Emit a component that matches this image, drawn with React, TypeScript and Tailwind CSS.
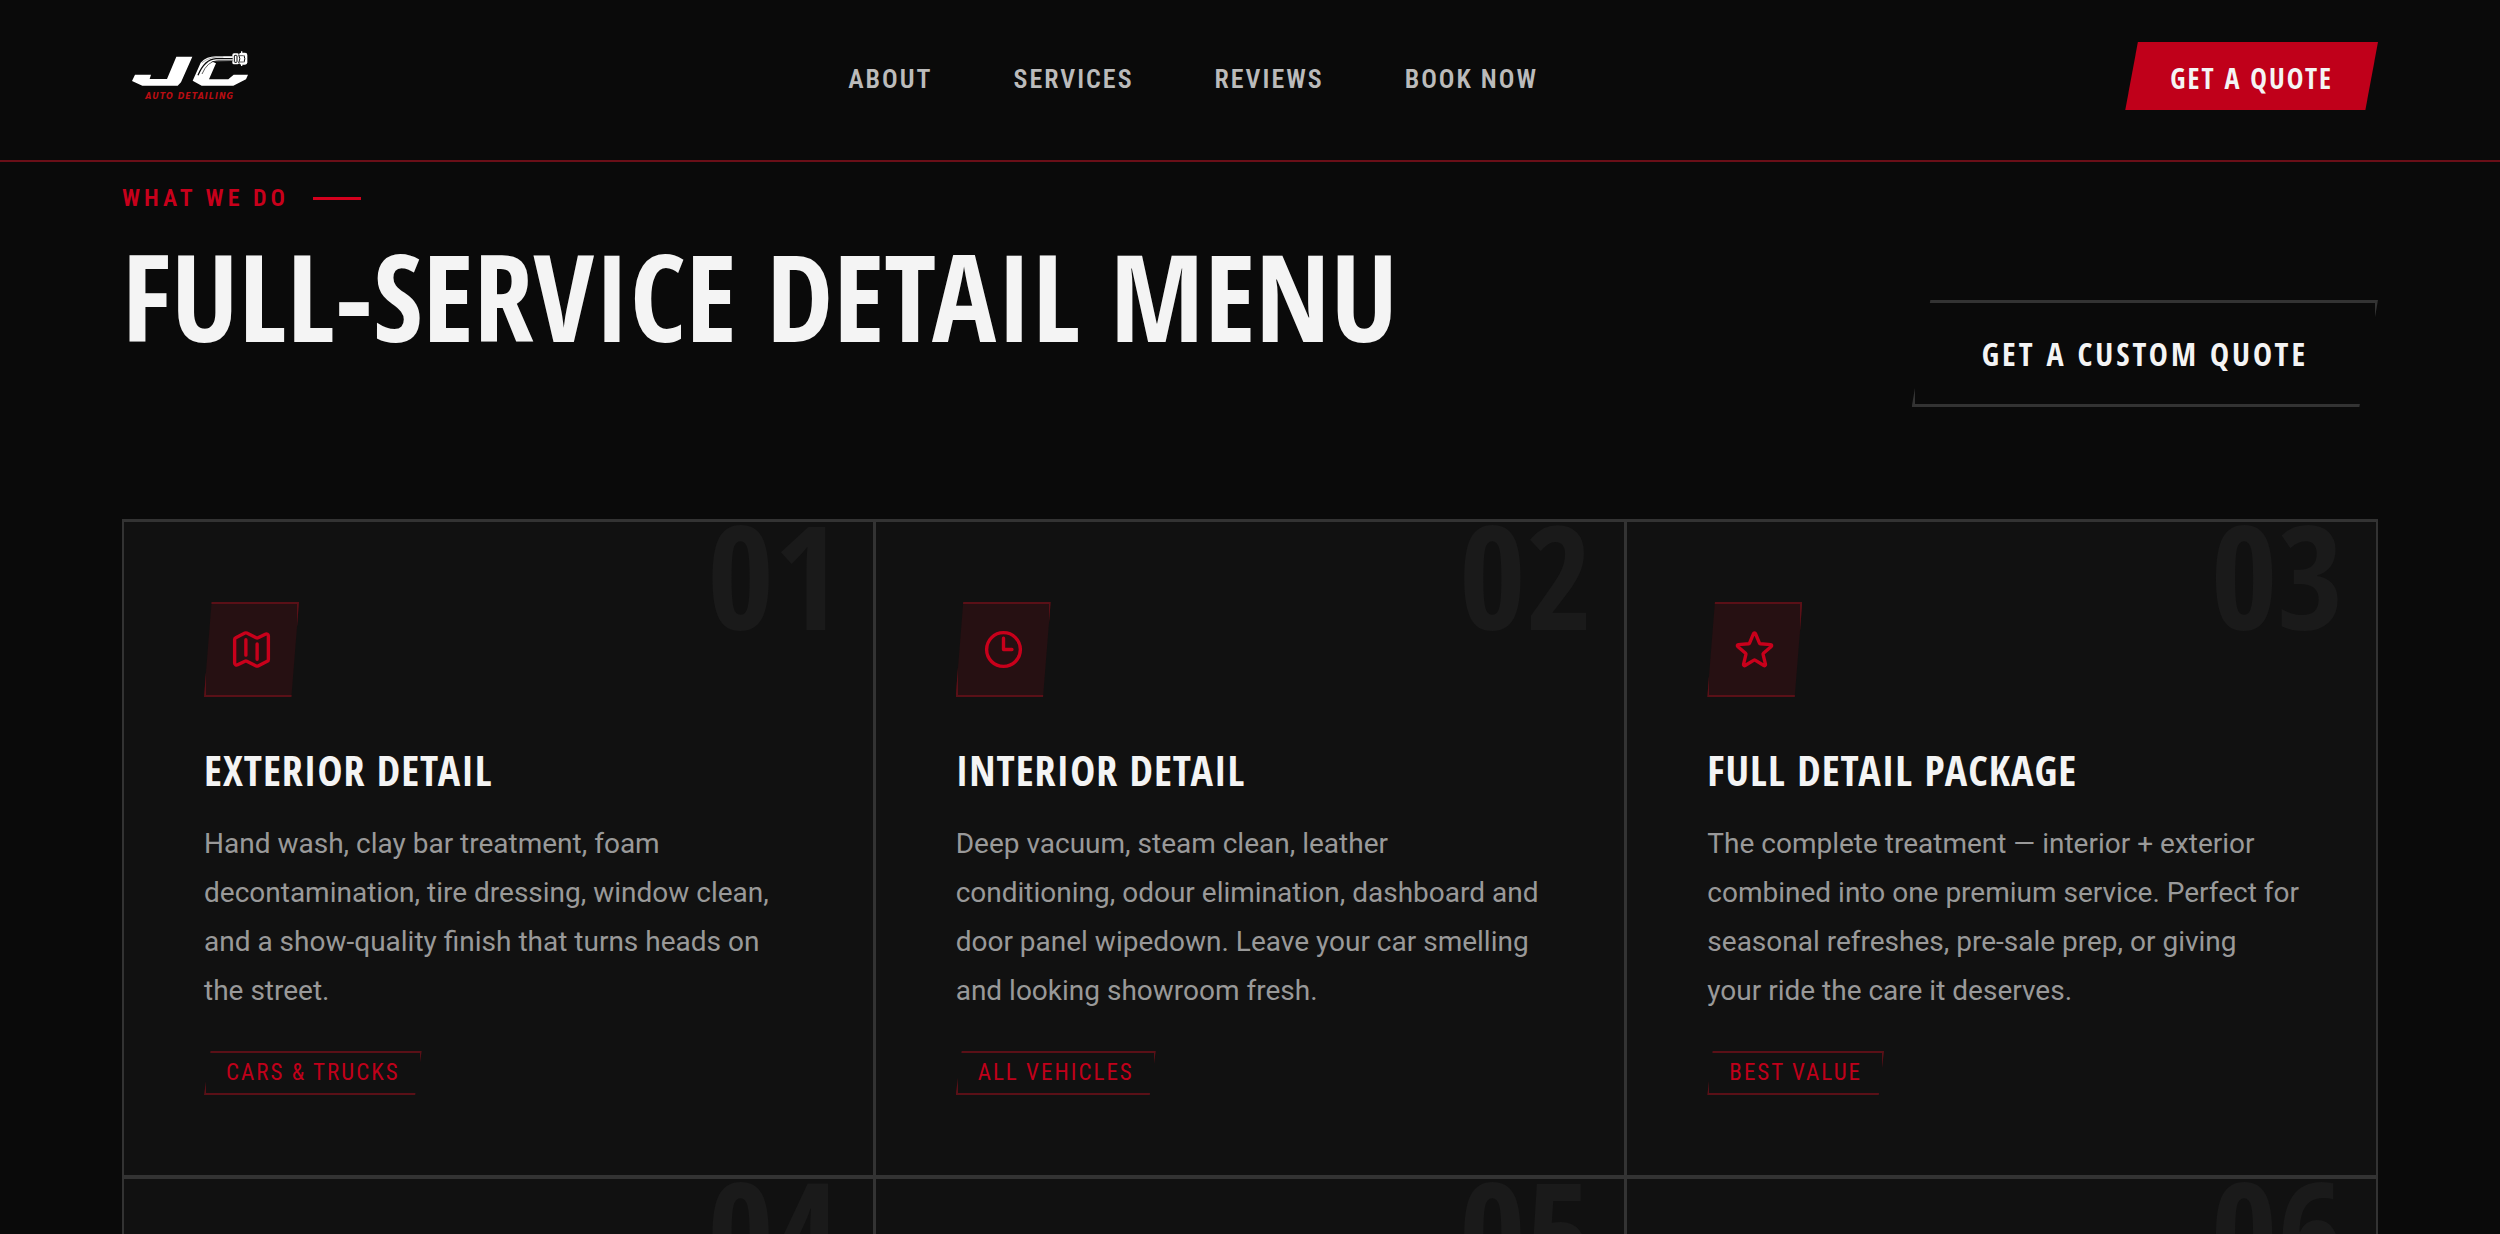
import type { ReactNode } from "react";

const navLinks = ["About", "Services", "Reviews", "Book Now"];

const iconPaths = {
  map: "M9 6.75V15m6-6v8.25m.503 3.498 4.875-2.437c.381-.19.622-.58.622-1.006V4.82c0-.836-.88-1.38-1.628-1.006l-3.869 1.934c-.317.159-.69.159-1.006 0L9.503 3.252a1.125 1.125 0 0 0-1.006 0L3.622 5.689C3.24 5.88 3 6.27 3 6.695V19.18c0 .836.88 1.38 1.628 1.006l3.869-1.934c.317-.159.69-.159 1.006 0l4.994 2.497c.317.158.69.158 1.006 0Z",
  clock: "M12 6v6h4.5m4.5 0a9 9 0 1 1-18 0 9 9 0 0 1 18 0Z",
  star: "M11.48 3.499a.562.562 0 0 1 1.04 0l2.125 5.111a.563.563 0 0 0 .475.345l5.518.442c.499.04.701.663.321.988l-4.204 3.602a.563.563 0 0 0-.182.557l1.285 5.385a.562.562 0 0 1-.84.61l-4.725-2.885a.562.562 0 0 0-.586 0L6.982 20.54a.562.562 0 0 1-.84-.61l1.285-5.386a.562.562 0 0 0-.182-.557l-4.204-3.602a.562.562 0 0 1 .321-.988l5.518-.442a.563.563 0 0 0 .475-.345L11.48 3.5Z",
};

type Service = {
  number: string;
  title: string;
  text: string;
  tag: string;
  icon: keyof typeof iconPaths;
};

const services: Service[] = [
  {
    number: "01",
    title: "Exterior Detail",
    text: "Hand wash, clay bar treatment, foam decontamination, tire dressing, window clean, and a show-quality finish that turns heads on the street.",
    tag: "Cars & Trucks",
    icon: "map",
  },
  {
    number: "02",
    title: "Interior Detail",
    text: "Deep vacuum, steam clean, leather conditioning, odour elimination, dashboard and door panel wipedown. Leave your car smelling and looking showroom fresh.",
    tag: "All Vehicles",
    icon: "clock",
  },
  {
    number: "03",
    title: "Full Detail Package",
    text: "The complete treatment — interior + exterior combined into one premium service. Perfect for seasonal refreshes, pre-sale prep, or giving your\u00a0ride the care it deserves.",
    tag: "Best Value",
    icon: "star",
  },
];

function Logo() {
  return (
    <svg viewBox="36 42 417 192" className="h-16 w-[139px]" role="img" aria-label="JC Auto Detailing">
      <g fill="#fff">
        <path d="M75 134H123L119 147H171L199 80H247L213 157L203 167H97L66 153Z" />
        <path d="M414 134H371L355 148H297L318 100L304 94L368 93V79H318Q290 79 272 98L248 152L275 167H370L408 148Z" />
        <rect x="367" y="70" width="20" height="33" rx="5" />
        <rect x="387" y="68" width="25" height="36" rx="7" />
        <path d="M393 64h4v44h-4z" />
      </g>
      <g fill="none" stroke="#0a0a0a">
        <path d="M368 86H318Q284 88 264 136" strokeWidth="4" />
        <path d="M368 92H322Q292 94 276 132" strokeWidth="2" />
        <path d="M340 81Q300 78 276 98" strokeWidth="1" />
        <rect x="373" y="76" width="8" height="21" rx="2" strokeWidth="3" />
        <path d="M386 74Q393 86 386 99M402 76Q407 86 402 97" strokeWidth="3" />
        <path d="M388 77H400M388 96H400" strokeWidth="2" />
      </g>
      <text
        x="106"
        y="207"
        fill="#b80d12"
        fontFamily="'DejaVu Sans', sans-serif"
        fontSize="24"
        fontWeight="700"
        fontStyle="italic"
        letterSpacing="3"
      >
        AUTO DETAILING
      </text>
    </svg>
  );
}

function Card({ number, children }: { number: string; children?: ReactNode }) {
  return (
    <article className="relative min-h-[200px] overflow-hidden bg-[#111111] py-20 pr-[72px] pl-20">
      <span
        aria-hidden="true"
        className="absolute -top-5 right-8 font-['Open_Sans_Condensed',sans-serif] text-[144px] leading-[144px] font-bold text-[#1a1a1a]"
      >
        {number}
      </span>
      {children}
    </article>
  );
}

export default function App() {
  return (
    <div className="h-screen overflow-hidden bg-[#0a0a0a] font-['Roboto',sans-serif] text-[#f4f4f4]">
      <header className="border-b-2 border-[#6a0f18] px-[122px] pb-2">
        <div className="flex h-38 items-center justify-between">
          <a href="#top">
            <Logo />
          </a>
          <nav className="flex gap-[81px] pt-1.5 font-['Roboto_Condensed',sans-serif] text-[26px] font-semibold tracking-[2px] text-[#bbbbbb] uppercase">
            {navLinks.map((label) => (
              <a key={label} href="#section">
                {label}
              </a>
            ))}
          </nav>
          <a
            href="#quote"
            className="bg-[#c0001a] px-[45px] pt-[18px] pb-3.5 font-['Open_Sans_Condensed',sans-serif] text-[28px] leading-9 font-bold tracking-[2px] uppercase [clip-path:polygon(5%_0,100%_0,95%_100%,0_100%)]"
          >
            Get a Quote
          </a>
        </div>
      </header>

      <main className="px-[122px] pt-5">
        <div className="flex items-end justify-between pb-28">
          <div>
            <p className="flex items-center gap-6 font-['Roboto_Condensed',sans-serif] text-[24px] leading-8 font-semibold tracking-[4px] text-[#c8001b] uppercase">
              What We Do
              <span className="h-[3px] w-12 bg-[#d4001d]" />
            </p>
            <h1 className="mt-4 pb-[45px] font-['Open_Sans_Condensed',sans-serif] text-[120px] leading-[132px] font-bold uppercase">
              Full-Service Detail Menu
            </h1>
          </div>
          <a
            href="#custom-quote"
            className="border-[3px] border-[#333333] px-[67px] py-8 font-['Open_Sans_Condensed',sans-serif] text-[32px] leading-[37px] font-bold tracking-[3px] uppercase [clip-path:polygon(4%_0,100%_0,96%_100%,0_100%)]"
          >
            Get a Custom Quote
          </a>
        </div>

        <section className="grid grid-cols-3 gap-x-[3px] gap-y-1 border-2 border-t-[3px] border-[#333333] bg-[#333333]">
          {services.map((s) => (
            <Card key={s.number} number={s.number}>
              <div className="flex size-[95px] items-center justify-center border-2 border-[#5a1017] bg-[#261012] text-[#c8001b] [clip-path:polygon(8%_0,100%_0,92%_100%,0_100%)]">
                <svg
                  viewBox="0 0 24 24"
                  className="size-[45px]"
                  fill="none"
                  stroke="currentColor"
                  strokeWidth="1.8"
                  strokeLinecap="round"
                  strokeLinejoin="round"
                  aria-hidden="true"
                >
                  <path d={iconPaths[s.icon]} />
                </svg>
              </div>
              <h2 className="mt-12 font-['Open_Sans_Condensed',sans-serif] text-[42px] leading-[50px] font-bold tracking-[1px] uppercase">
                {s.title}
              </h2>
              <p className="mt-6 text-[28px] leading-[49px] text-[#999999]">{s.text}</p>
              <span className="mt-9 inline-block border-2 border-[#5a1017] px-5 py-1 font-['Roboto_Condensed',sans-serif] text-[23px] leading-8 tracking-[2px] text-[#c0001a] uppercase [clip-path:polygon(3%_0,100%_0,97%_100%,0_100%)]">
                {s.tag}
              </span>
            </Card>
          ))}
          <Card number="04" />
          <Card number="05" />
          <Card number="06" />
        </section>
      </main>
    </div>
  );
}
